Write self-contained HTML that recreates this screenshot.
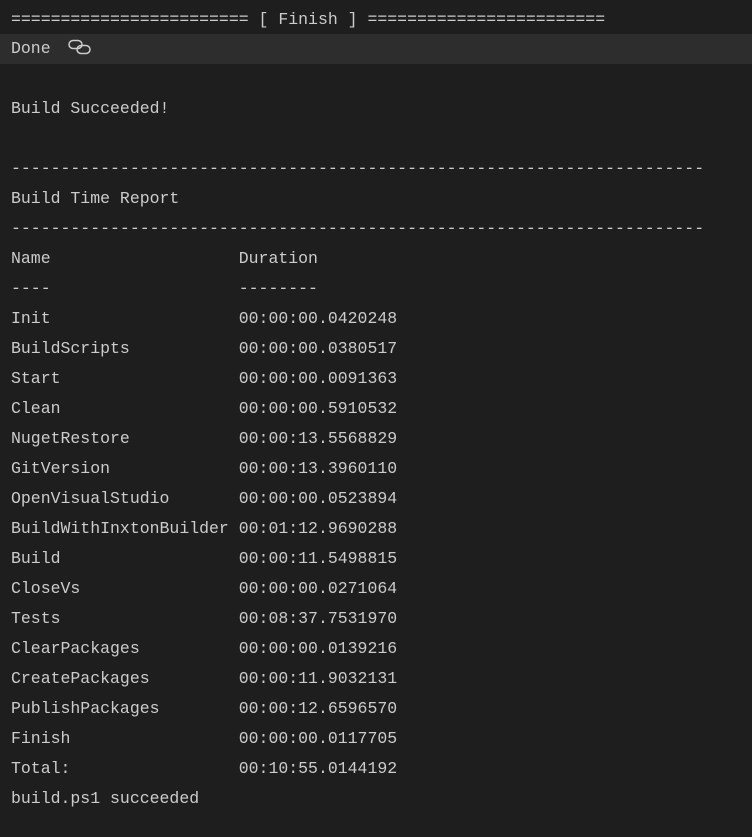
<!DOCTYPE html>
<html><head><meta charset="utf-8"><style>
html,body{margin:0;padding:0;background:#1e1e1e;width:752px;height:837px;overflow:hidden}
.w{padding-top:5px}
.l{height:30px;line-height:30px;padding-left:11px;white-space:pre;font-family:"Liberation Mono",monospace;font-size:16.5px;color:#cccccc}
.b{background:#2d2d2d;margin-top:-1px;padding-top:1px;height:29px;line-height:28px}
svg{vertical-align:middle;margin-left:17px;position:relative;top:-2px}
</style></head><body><div class="w">
<div class="l">======================== [ Finish ] ========================</div>
<div class="l b">Done<svg width="24" height="16" viewBox="0 0 24 16" fill="none" stroke="#cccccc" stroke-width="1.5"><rect x="1" y="1.5" width="13" height="8" rx="4"/><rect x="9" y="6.5" width="13" height="8" rx="4"/></svg></div>
<div class="l"> </div>
<div class="l">Build Succeeded!</div>
<div class="l"> </div>
<div class="l">----------------------------------------------------------------------</div>
<div class="l">Build Time Report</div>
<div class="l">----------------------------------------------------------------------</div>
<div class="l">Name                   Duration</div>
<div class="l">----                   --------</div>
<div class="l">Init                   00:00:00.0420248</div>
<div class="l">BuildScripts           00:00:00.0380517</div>
<div class="l">Start                  00:00:00.0091363</div>
<div class="l">Clean                  00:00:00.5910532</div>
<div class="l">NugetRestore           00:00:13.5568829</div>
<div class="l">GitVersion             00:00:13.3960110</div>
<div class="l">OpenVisualStudio       00:00:00.0523894</div>
<div class="l">BuildWithInxtonBuilder 00:01:12.9690288</div>
<div class="l">Build                  00:00:11.5498815</div>
<div class="l">CloseVs                00:00:00.0271064</div>
<div class="l">Tests                  00:08:37.7531970</div>
<div class="l">ClearPackages          00:00:00.0139216</div>
<div class="l">CreatePackages         00:00:11.9032131</div>
<div class="l">PublishPackages        00:00:12.6596570</div>
<div class="l">Finish                 00:00:00.0117705</div>
<div class="l">Total:                 00:10:55.0144192</div>
<div class="l">build.ps1 succeeded</div>
</div></body></html>
